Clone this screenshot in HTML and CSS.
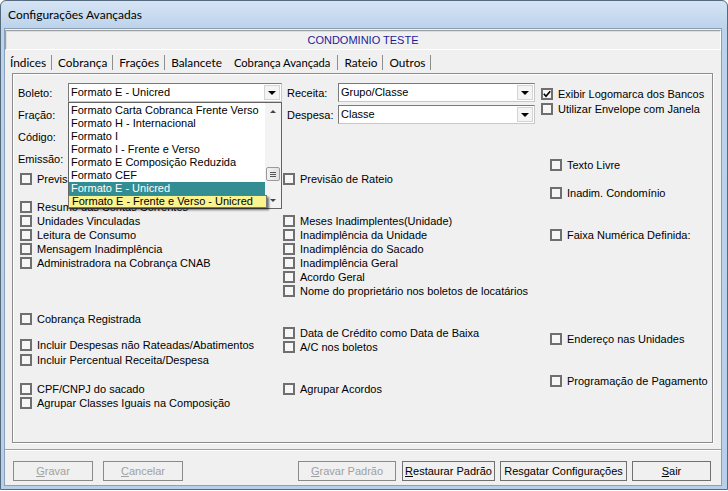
FILE: index.html
```html
<!DOCTYPE html>
<html lang="pt">
<head>
<meta charset="utf-8">
<title>Configurações Avançadas</title>
<link rel="stylesheet" href="styles.css">
</head>
<body>
<div class="window">
  <div class="titlebar">Configurações Avançadas</div>
  <div class="client">
    <div class="header">CONDOMINIO TESTE</div>
    <div class="tabs">
      <span class="tab">Índices</span>
      <span class="tab">Cobrança</span>
      <span class="tab">Frações</span>
      <span class="tab before-active">Balancete</span>
      <span class="tab active">Cobrança Avançada</span>
      <span class="tab">Rateio</span>
      <span class="tab">Outros</span>
    </div>
    <div class="page">
      <div class="top">
        <span class="lbl">Boleto:</span>
        <div class="combo"><span class="combo-text">Formato E - Unicred</span><span class="combo-btn"><i class="tri-down"></i></span></div>
        <span></span>
        <span class="lbl">Receita:</span>
        <div class="combo"><span class="combo-text">Grupo/Classe</span><span class="combo-btn"><i class="tri-down"></i></span></div>
        <span></span>
        <div class="right-checks">
          <label class="cb"><span class="box checked"><svg width="8" height="8" viewBox="0 0 8 8"><path d="M0.8 3.8 L3 6.2 L7.2 1.2" fill="none" stroke="#000" stroke-width="1.6"/></svg></span>Exibir Logomarca dos Bancos</label>
          <label class="cb"><span class="box"></span>Utilizar Envelope com Janela</label>
        </div>

        <span class="lbl">Fração:</span>
        <div class="combo"><span class="combo-text"></span><span class="combo-btn"><i class="tri-down"></i></span></div>
        <span></span>
        <span class="lbl">Despesa:</span>
        <div class="combo"><span class="combo-text">Classe</span><span class="combo-btn"><i class="tri-down"></i></span></div>

        <span class="lbl row3">Código:</span>
        <span class="lbl row4">Emissão:</span>
      </div>

      <div class="checks">
        <label class="cb c3 r1"><span class="box"></span>Texto Livre</label>
        <label class="cb c1 r2"><span class="box"></span>Previsão de Despesas</label>
        <label class="cb c2 r2"><span class="box"></span>Previsão de Rateio</label>
        <label class="cb c3 r3"><span class="box"></span>Inadim. Condomínio</label>
        <label class="cb c1 r4"><span class="box"></span>Resumo das Contas Correntes</label>
        <label class="cb c1 r5"><span class="box"></span>Unidades Vinculadas</label>
        <label class="cb c2 r5"><span class="box"></span>Meses Inadimplentes(Unidade)</label>
        <label class="cb c1 r6"><span class="box"></span>Leitura de Consumo</label>
        <label class="cb c2 r6"><span class="box"></span>Inadimplência da Unidade</label>
        <label class="cb c3 r6"><span class="box"></span>Faixa Numérica Definida:</label>
        <label class="cb c1 r7"><span class="box"></span>Mensagem Inadimplência</label>
        <label class="cb c2 r7"><span class="box"></span>Inadimplência do Sacado</label>
        <label class="cb c1 r8"><span class="box"></span>Administradora na Cobrança CNAB</label>
        <label class="cb c2 r8"><span class="box"></span>Inadimplência Geral</label>
        <label class="cb c2 r9"><span class="box"></span>Acordo Geral</label>
        <label class="cb c2 r10"><span class="box"></span>Nome do proprietário nos boletos de locatários</label>
        <label class="cb c1 r12"><span class="box"></span>Cobrança Registrada</label>
        <label class="cb c2 r13"><span class="box"></span>Data de Crédito como Data de Baixa</label>
        <label class="cb c3 r13 down6"><span class="box"></span>Endereço nas Unidades</label>
        <label class="cb c1 r14 up2"><span class="box"></span>Incluir Despesas não Rateadas/Abatimentos</label>
        <label class="cb c2 r14"><span class="box"></span>A/C nos boletos</label>
        <label class="cb c1 r15 up1"><span class="box"></span>Incluir Percentual Receita/Despesa</label>
        <label class="cb c3 r16 down6"><span class="box"></span>Programação de Pagamento</label>
        <label class="cb c1 r17"><span class="box"></span>CPF/CNPJ do sacado</label>
        <label class="cb c2 r17"><span class="box"></span>Agrupar Acordos</label>
        <label class="cb c1 r18"><span class="box"></span>Agrupar Classes Iguais na Composição</label>
      </div>

      <div class="dropdown">
        <div class="items">
          <div class="item">Formato Carta Cobranca Frente Verso</div>
          <div class="item">Formato H - Internacional</div>
          <div class="item">Formato I</div>
          <div class="item">Formato I - Frente e Verso</div>
          <div class="item">Formato E Composição Reduzida</div>
          <div class="item">Formato CEF</div>
          <div class="item selected">Formato E - Unicred</div>
          <div class="item">Formato E - Frente e Verso - Unicred</div>
        </div>
        <div class="scrollbar">
          <div class="sb-arrow"><i class="tri-up-s"></i></div>
          <div class="sb-track"><div class="sb-thumb"><i></i><i></i><i></i></div></div>
          <div class="sb-arrow"><i class="tri-down-s"></i></div>
        </div>
      </div>
      <div class="hint">Formato E - Frente e Verso - Unicred</div>
    </div>
    <div class="buttons">
      <button class="btn disabled w-gravar"><u>G</u>ravar</button>
      <button class="btn disabled w-cancelar"><u>C</u>ancelar</button>
      <button class="btn disabled w-gpadrao"><u>G</u>ravar Padrão</button>
      <button class="btn w-restaurar"><u>R</u>estaurar Padrão</button>
      <button class="btn w-resgatar">Resgatar Configurações</button>
      <button class="btn w-sair"><u>S</u>air</button>
    </div>
  </div>
</div>
</body>
</html>
```

FILE: styles.css
```css
html, body {
  margin: 0;
  padding: 0;
}
body {
  width: 728px;
  height: 491px;
  overflow: hidden;
  background: #ffffff;
  font-family: "Liberation Sans", Arial, sans-serif;
  font-size: 11px;
  color: #000;
}
.window {
  box-sizing: border-box;
  width: 728px;
  height: 490px;
  border: 1px solid #55697f;
  border-radius: 6px 6px 0 0;
  background: linear-gradient(#d5e4f4 0px, #bcd3eb 28px, #b7cfe8 100%);
  padding: 0 5px 3px 3px;
  display: flex;
  flex-direction: column;
}
.titlebar {
  height: 27px;
  flex: none;
  display: flex;
  align-items: center;
  padding-left: 4px;
  font-family: Lato, "Liberation Sans", sans-serif;
  font-size: 12px;
  color: #000;
}
.client {
  flex: 1;
  background: #f0f0f0;
  border: 1px solid #8aa0b8;
  display: flex;
  flex-direction: column;
  min-height: 0;
}
.header {
  flex: none;
  height: 20px;
  margin-top: 1px;
  box-sizing: border-box;
  border: 1px solid #a0a0a0;
  border-right-color: #fff;
  border-bottom-color: #fff;
  box-shadow: inset 1px 1px 0 #dcdcdc;
  display: flex;
  align-items: center;
  justify-content: center;
  color: #1c1c9a;
  font-size: 11px;
}
.tabs {
  flex: none;
  height: 23px;
  display: flex;
  align-items: center;
  padding-left: 0;
  font-family: Lato, "Liberation Sans", sans-serif;
  font-size: 11.8px;
}
.tab {
  padding: 0 5px 0 6px;
  height: 15px;
  line-height: 15px;
  margin-top: 2px;
  border-right: 1px solid #8e8e8e;
}
.tab:first-child {
  padding-left: 5px;
}
.tab.before-active {
  border-right: none;
  padding-right: 6px;
}
.tab.active {
  padding: 0 7px 0 6px;
  font-size: 11.2px;
}
.page {
  flex: none;
  position: relative;
  height: 370px;
  box-sizing: border-box;
  margin: 0 8px 0 7px;
  border: 1px solid #8c8c8c;
  box-shadow: inset 1px 1px 0 #fff, 1px 1px 0 #fff;
  padding: 9px 0 0 5px;
}
.top {
  display: grid;
  grid-template-columns: 50px 214px 5px 51px 197px 6px auto;
  grid-template-rows: 19px 19px 19px 19px;
  row-gap: 3px;
}
.lbl {
  display: flex;
  align-items: center;
  white-space: nowrap;
}
.row3 { grid-row: 3; grid-column: 1; }
.row4 { grid-row: 4; grid-column: 1; }
.combo {
  box-sizing: border-box;
  height: 19px;
  background: #fff;
  border: 1px solid #7a7a7a;
  border-right-color: #c8c8c8;
  border-bottom-color: #c8c8c8;
  display: flex;
  align-items: stretch;
}
.combo-text {
  flex: 1;
  padding-left: 2px;
  line-height: 17px;
  white-space: nowrap;
  overflow: hidden;
}
.combo-btn {
  width: 16px;
  margin: 1px;
  background: #f4f4f4;
  border: 1px solid #d4d4d4;
  box-sizing: border-box;
  display: flex;
  align-items: center;
  justify-content: center;
}
.tri-down {
  width: 0;
  height: 0;
  border-left: 4px solid transparent;
  border-right: 4px solid transparent;
  border-top: 4px solid #000;
  margin-top: 1px;
}
.right-checks {
  grid-row: 1 / span 2;
  grid-column: 7;
  padding-top: 3px;
  display: flex;
  flex-direction: column;
}
.right-checks .cb {
  height: 15px;
}
.cb {
  display: flex;
  align-items: center;
  gap: 5px;
  height: 14px;
  white-space: nowrap;
}
.box {
  flex: none;
  box-sizing: border-box;
  width: 12px;
  height: 12px;
  border: 2px solid #6f6f6f;
  background: #f6f6f6;
  display: flex;
  align-items: center;
  justify-content: center;
}
.box svg { display: block; }
.checks {
  margin: -10px 0 0 2px;
  display: grid;
  grid-template-columns: 263px 267px 1fr;
  grid-auto-rows: 14px;
}
.c1 { grid-column: 1; }
.c2 { grid-column: 2; }
.c3 { grid-column: 3; }
.r1 { grid-row: 1; }
.r2 { grid-row: 2; }
.r3 { grid-row: 3; }
.r4 { grid-row: 4; }
.r5 { grid-row: 5; }
.r6 { grid-row: 6; }
.r7 { grid-row: 7; }
.r8 { grid-row: 8; }
.r9 { grid-row: 9; }
.r10 { grid-row: 10; }
.r12 { grid-row: 12; }
.r13 { grid-row: 13; }
.r14 { grid-row: 14; }
.r15 { grid-row: 15; }
.r16 { grid-row: 16; }
.r17 { grid-row: 17; }
.r18 { grid-row: 18; }
.down6 { margin-top: 6px; }
.up2 { margin-top: -2px; }
.up1 { margin-top: -1px; }

.dropdown {
  position: absolute;
  left: 55px;
  top: 28px;
  width: 214px;
  height: 107px;
  box-sizing: border-box;
  border: 1px solid #646464;
  background: #fff;
  display: flex;
  z-index: 5;
}
.items {
  flex: 1;
  padding-top: 1px;
  overflow: hidden;
}
.item {
  height: 13px;
  line-height: 13px;
  padding-left: 2px;
  white-space: nowrap;
}
.item.selected {
  background: #338e93;
  color: #fff;
}
.scrollbar {
  width: 16px;
  display: flex;
  flex-direction: column;
  background: #f3f3f3;
}
.sb-arrow {
  height: 16px;
  display: flex;
  align-items: center;
  justify-content: center;
}
.tri-up-s {
  width: 0; height: 0;
  border-left: 3px solid transparent;
  border-right: 3px solid transparent;
  border-bottom: 3px solid #444;
}
.tri-down-s {
  width: 0; height: 0;
  border-left: 3px solid transparent;
  border-right: 3px solid transparent;
  border-top: 3px solid #444;
}
.sb-track {
  flex: 1;
  display: flex;
  flex-direction: column;
  align-items: center;
}
.sb-thumb {
  box-sizing: border-box;
  margin-top: 48px;
  width: 14px;
  height: 14px;
  border: 1px solid #9a9a9a;
  border-radius: 2px;
  background: linear-gradient(90deg, #f2f2f2, #e2e2e2);
  display: flex;
  flex-direction: column;
  align-items: center;
  justify-content: center;
  gap: 1px;
}
.sb-thumb i {
  display: block;
  width: 6px;
  height: 1px;
  background: #555;
}
.hint {
  position: absolute;
  left: 55px;
  top: 121px;
  width: 199px;
  height: 13px;
  box-sizing: border-box;
  background: #faf38f;
  border: 1px solid #767676;
  line-height: 11px;
  padding-left: 3px;
  white-space: nowrap;
  box-shadow: 2px 2px 2px rgba(0,0,0,0.55);
  z-index: 6;
}
.buttons {
  flex: 1;
  margin-top: 6px;
  border-top: 1px solid #a0a0a0;
  box-shadow: inset 0 1px 0 #fff;
  display: flex;
  align-items: flex-start;
  padding-top: 11px;
}
.btn {
  height: 20px;
  box-sizing: border-box;
  border: 1px solid #707070;
  background: #f0f0f0;
  font-family: "Liberation Sans", Arial, sans-serif;
  font-size: 11px;
  color: #000;
  padding: 0;
  margin: 0;
}
.btn.disabled {
  color: #a0a0a0;
  border-color: #8a8a8a;
}
.w-gravar { width: 80px; margin-left: 8px; }
.w-cancelar { width: 80px; margin-left: 10px; }
.w-gpadrao { width: 98px; margin-left: 115px; }
.w-restaurar { width: 93px; margin-left: 6px; }
.w-resgatar { width: 127px; margin-left: 5px; }
.w-sair { width: 79px; margin-left: 5px; }
```
